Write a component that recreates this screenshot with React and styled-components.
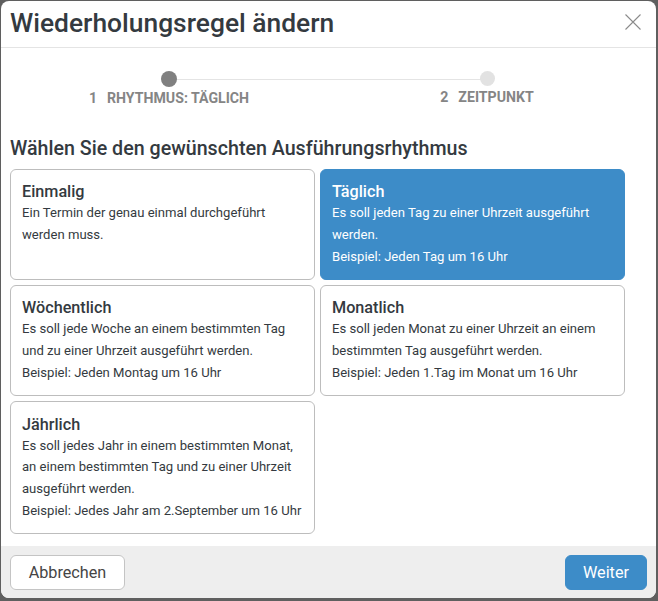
import React from "react";
import styled, { createGlobalStyle } from "styled-components";

const GlobalStyle = createGlobalStyle`
  html, body {
    margin: 0;
    padding: 0;
    background: #5f5f5f;
  }
  body {
    font-family: Roboto, "Liberation Sans", sans-serif;
  }
`;

const Page = styled.div`
  width: 658px;
  height: 601px;
  box-sizing: border-box;
  padding: 1px 2px 3px 1px;
  overflow: hidden;
`;
const Modal = styled.div`
  height: 100%;
  display: flex;
  flex-direction: column;
  background: #fff;
  border-radius: 8px;
  overflow: hidden;
`;
const Header = styled.header`
  height: 46px;
  box-sizing: content-box;
  flex: none;
  display: flex;
  align-items: center;
  justify-content: space-between;
  padding: 0 14px 0 9px;
  border-bottom: 1px solid #e4e4e4;
`;
const Title = styled.h1`
  margin: 0 0 2px;
  font-size: 26.4px;
  font-weight: 500;
  color: #343a40;
`;
const CloseButton = styled.button`
  display: flex;
  margin-bottom: 4px;
  padding: 0;
  border: 0;
  background: none;
  color: #8b8b8b;
`;
const Stepper = styled.div`
  flex: none;
  display: grid;
  grid-template-columns: 1fr 1fr;
  width: 636px;
  margin: 23px 0 0 9px;
`;
const Step = styled.div`
  position: relative;
  display: flex;
  flex-direction: column;
  align-items: center;
  gap: 2px;
  &::before {
    content: "";
    position: absolute;
    top: 8px;
    height: 1px;
    background: #e4e4e4;
    ${(p) => (p.$first ? "left: 50%; right: 0;" : "left: 0; right: 50%;")}
  }
`;
const Dot = styled.span`
  position: relative;
  width: ${(p) => (p.$active ? 16 : 15)}px;
  height: ${(p) => (p.$active ? 16 : 15)}px;
  border-radius: 50%;
  background: ${(p) => (p.$active ? "#808080" : "#e2e2e2")};
`;
const StepLabel = styled.span`
  display: flex;
  gap: 10px;
  font-size: 14.15px;
  line-height: 18px;
  font-weight: 700;
  color: #858585;
`;
const Content = styled.main`
  flex: 1;
  padding: 0 9px;
`;
const Heading = styled.h2`
  margin: 30px 0 8px;
  font-size: 19.65px;
  line-height: 24px;
  font-weight: 500;
  color: #343a40;
`;
const Options = styled.div`
  display: grid;
  grid-template-columns: 305px 305px;
  gap: 5px;
  align-items: stretch;
`;
const Option = styled.div`
  box-sizing: border-box;
  padding: 12.4px 11px 11.6px;
  border: 1px solid ${(p) => (p.$selected ? "#3d8cc8" : "#bdbdbd")};
  border-radius: 6px;
  background: ${(p) => (p.$selected ? "#3d8cc8" : "#fff")};
  color: ${(p) => (p.$selected ? "#fff" : "#343a40")};
`;
const OptionTitle = styled.div`
  font-size: 16.2px;
  line-height: 20px;
  font-weight: 500;
`;
const OptionText = styled.div`
  font-size: 13.1px;
  line-height: 21.7px;
`;
const Footer = styled.footer`
  flex: none;
  height: 52px;
  box-sizing: border-box;
  display: flex;
  align-items: center;
  justify-content: space-between;
  padding: 0 9px;
  background: #eeeeee;
`;
const Button = styled.button`
  height: 35px;
  box-sizing: border-box;
  padding: 0;
  width: ${(p) => (p.$primary ? 82 : 115)}px;
  border: 1px solid ${(p) => (p.$primary ? "#3d8cc8" : "#c4c4c4")};
  border-radius: 6px;
  background: ${(p) => (p.$primary ? "#3d8cc8" : "#fff")};
  color: ${(p) => (p.$primary ? "#fff" : "#454545")};
  font-family: inherit;
  font-size: 16.2px;
`;

const options = [
  {
    title: "Einmalig",
    lines: ["Ein Termin der genau einmal durchgeführt", "werden muss.", "\u00a0"],
  },
  {
    title: "Täglich",
    selected: true,
    lines: [
      "Es soll jeden Tag zu einer Uhrzeit ausgeführt",
      "werden.",
      "Beispiel: Jeden Tag um 16 Uhr",
    ],
  },
  {
    title: "Wöchentlich",
    lines: [
      "Es soll jede Woche an einem bestimmten Tag",
      "und zu einer Uhrzeit ausgeführt werden.",
      "Beispiel: Jeden Montag um 16 Uhr",
    ],
  },
  {
    title: "Monatlich",
    lines: [
      "Es soll jeden Monat zu einer Uhrzeit an einem",
      "bestimmten Tag ausgeführt werden.",
      "Beispiel: Jeden 1.Tag im Monat um 16 Uhr",
    ],
  },
  {
    title: "Jährlich",
    lines: [
      "Es soll jedes Jahr in einem bestimmten Monat,",
      "an einem bestimmten Tag und zu einer Uhrzeit",
      "ausgeführt werden.",
      "Beispiel: Jedes Jahr am 2.September um 16 Uhr",
    ],
  },
];

export default function App() {
  return (
    <Page>
      <GlobalStyle />
      <Modal>
        <Header>
          <Title>Wiederholungsregel ändern</Title>
          <CloseButton aria-label="Schließen">
            <svg width="18" height="18" viewBox="0 0 18 18" fill="none" stroke="currentColor" strokeWidth="1.1">
              <path d="M1.5 1.5 16.5 16.5M16.5 1.5 1.5 16.5" />
            </svg>
          </CloseButton>
        </Header>
        <Stepper>
          <Step $first>
            <Dot $active />
            <StepLabel>
              <span>1</span>
              <span>RHYTHMUS: TÄGLICH</span>
            </StepLabel>
          </Step>
          <Step>
            <Dot />
            <StepLabel>
              <span>2</span>
              <span>ZEITPUNKT</span>
            </StepLabel>
          </Step>
        </Stepper>
        <Content>
          <Heading>Wählen Sie den gewünschten Ausführungsrhythmus</Heading>
          <Options>
            {options.map((o) => (
              <Option key={o.title} $selected={o.selected}>
                <OptionTitle>{o.title}</OptionTitle>
                {o.lines.map((line, i) => (
                  <OptionText key={i}>{line}</OptionText>
                ))}
              </Option>
            ))}
          </Options>
        </Content>
        <Footer>
          <Button>Abbrechen</Button>
          <Button $primary>Weiter</Button>
        </Footer>
      </Modal>
    </Page>
  );
}
